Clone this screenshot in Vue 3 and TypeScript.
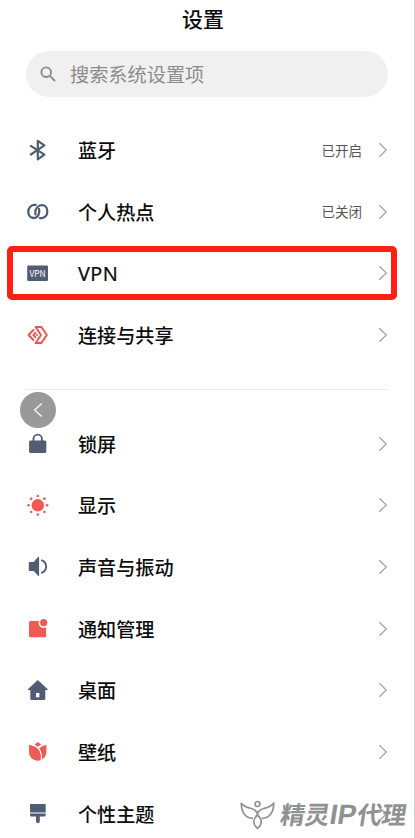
<script setup lang="ts">
interface Item {
  icon: string
  label: string
  status?: string
  highlighted?: boolean
}

const groups: Item[][] = [
  [
    { icon: 'bluetooth', label: '蓝牙', status: '已开启' },
    { icon: 'hotspot', label: '个人热点', status: '已关闭' },
    { icon: 'vpn', label: 'VPN', highlighted: true },
    { icon: 'share', label: '连接与共享' },
  ],
  [
    { icon: 'lock', label: '锁屏' },
    { icon: 'display', label: '显示' },
    { icon: 'sound', label: '声音与振动' },
    { icon: 'notice', label: '通知管理' },
    { icon: 'home', label: '桌面' },
    { icon: 'wallpaper', label: '壁纸' },
    { icon: 'theme', label: '个性主题' },
  ],
]

const rays = [0, 45, 90, 135, 180, 225, 270, 315]
</script>

<template>
  <main class="screen">
    <h1 class="title">设置</h1>
    <div class="search">
      <svg class="search-icon" viewBox="0 0 16 16">
        <circle cx="6.2" cy="6.2" r="4.8" />
        <path d="M9.8 9.8L15 15" />
      </svg>
      <span>搜索系统设置项</span>
    </div>

    <section v-for="(group, g) in groups" :key="g" class="group">
      <div v-for="item in group" :key="item.label" class="row">
        <svg class="icon" viewBox="0 0 24 24">
          <g v-if="item.icon === 'bluetooth'" class="line navy">
            <path d="M4.8 6.8L18.4 15.7L11.8 20.3V1.8L18.4 6.4L4.8 15.5" stroke-width="2.2" />
          </g>
          <g v-else-if="item.icon === 'hotspot'" class="line navy">
            <path d="M9.6 5C5.2 4.6 2.3 7.8 2.3 11.8C2.3 15.6 4.6 18 7.6 18C10.6 18 12.6 15.6 13.1 12.6C13.3 11.2 13.3 10 13 8.8" stroke-width="2.3" />
            <path d="M14 18.2C18.4 18.6 21.3 15.4 21.3 11.4C21.3 7.6 19 5.2 16 5.2C13 5.2 10.2 7.6 9.5 10.6C9.2 12 9.2 13.2 9.5 14.4" stroke-width="2.3" />
          </g>
          <g v-else-if="item.icon === 'vpn'">
            <rect class="fill-navy" x="1.2" y="3.4" width="20.8" height="15.6" rx="1.2" />
            <text class="vpn-text" x="11.6" y="14.6">VPN</text>
          </g>
          <g v-else-if="item.icon === 'share'" class="line red">
            <path d="M9.6 4H15.4L20.8 12L15.4 20H9.6L15 12Z" stroke-width="2" />
            <path d="M7.4 7L2.6 12L7.4 17M9.4 9.8L7.4 12L9.4 14.2" stroke-width="2" />
            <path d="M10.8 12H10.9" stroke-width="2" />
          </g>
          <g v-else-if="item.icon === 'lock'">
            <path class="line navy" d="M7.5 10V6.8a4.2 4.2 0 0 1 8.4 0v3.2" stroke-width="1.9" />
            <rect class="fill-navy" x="3.1" y="8.6" width="17.2" height="12.4" rx="1.4" />
          </g>
          <g v-else-if="item.icon === 'display'" class="fill-red">
            <circle cx="11.8" cy="11.3" r="6.2" />
            <circle v-for="a in rays" :key="a" cx="21.1" cy="11.3" r="1.3" :transform="`rotate(${a} 11.8 11.3)`" />
          </g>
          <g v-else-if="item.icon === 'sound'">
            <path class="fill-navy" d="M3.4 7.1H7.7L12 2.1Q13.1 1 13.1 2.5V20.3Q13.1 21.8 12 20.7L7.7 15.9H3.4Q2.8 15.9 2.8 15.3V7.7Q2.8 7.1 3.4 7.1Z" />
            <path class="line navy" d="M15.9 5.4C21.4 7.3 21.4 15.9 15.9 17.7" stroke-width="1.9" />
          </g>
          <g v-else-if="item.icon === 'notice'">
            <rect class="fill-red" x="3" y="4" width="17.1" height="16.2" rx="1.5" />
            <circle cx="17.7" cy="5.9" r="5.1" fill="#fff" />
            <circle class="fill-red" cx="17.7" cy="5.7" r="3.6" />
          </g>
          <path v-else-if="item.icon === 'home'" class="fill-navy" fill-rule="evenodd" d="M11.2 1.6Q11.8 1.1 12.4 1.6L21.7 10.2Q22.2 11.1 21.1 11.1H19.3V19.7Q19.3 21 18 21H5.6Q4.3 21 4.3 19.7V11.1H2.5Q1.4 11.1 1.9 10.2ZM10 14V18.2H13.4V14Z" />
          <g v-else-if="item.icon === 'wallpaper'" class="fill-red">
            <path d="M3 4.7Q11 5.9 13.8 11.6Q15.4 15.4 14.7 20.3C7.6 22 2.8 17.6 3 11.6Z" />
            <path d="M20.4 4.7V12.1Q20 17.3 16 19.8Q16.5 12.9 13.2 8.2Q16.2 5.6 20.4 4.7Z" />
            <path d="M11.8 2.1L15.2 4.6L11.8 6.7L8.6 4.6Z" />
          </g>
          <g v-else class="fill-navy">
            <rect x="4" y="2" width="15.7" height="8.6" rx=".7" />
            <path d="M4 11.5H19.7V13Q19.7 14.5 18.3 14.5H13.8V19.2Q13.8 21.1 11.9 21.1Q10 21.1 10 19.2V14.5H5.4Q4 14.5 4 13Z" />
          </g>
        </svg>
        <span class="label" :class="{ latin: item.highlighted }">{{ item.label }}</span>
        <span v-if="item.status" class="status">{{ item.status }}</span>
        <svg class="chevron" viewBox="0 0 10 16"><path d="M1.3 1.2L8.3 8L1.3 14.8" /></svg>
        <div v-if="item.highlighted" class="highlight"></div>
      </div>
    </section>

    <div class="back">
      <svg viewBox="0 0 10 16"><path d="M8.8 1.5L1.6 8L8.8 14.5" /></svg>
    </div>

    <div class="watermark">
      <svg viewBox="0 0 36 30">
        <circle cx="17.5" cy="4" r="2.5" />
        <path d="M1.2 3C3.8 7 7.4 7.5 11.2 8.5C15 9.5 17.5 12 17.5 15C17.5 12 20 9.5 23.8 8.5C27.6 7.5 31.2 7 33.8 3C33.6 11 30.8 17.8 22 18.4M1.2 3C1.4 11 4.2 17.8 13 18.4" />
        <path d="M17.5 15C12.5 19 12.5 24.5 17.5 28.4C22.5 24.5 22.5 19 17.5 15Z" />
      </svg>
      <span class="brand">精灵<span class="brand-latin">IP</span>代理</span>
    </div>
  </main>
</template>

<style>
body {
  margin: 0;
  overflow: hidden;
}
</style>

<style scoped>
.screen {
  position: relative;
  box-sizing: border-box;
  width: 415px;
  height: 838px;
  overflow: hidden;
  padding: 0 26px;
  border-right: 1px solid #d2d2d2;
  background: #fff;
  color: #0c0c0c;
  font-family: "Noto Sans CJK SC", sans-serif;
}
.title {
  height: 37px;
  margin: 0 0 14px;
  padding-left: 28px;
  padding-right: 36px;
  font-size: 21px;
  line-height: 36px;
  font-weight: 500;
  text-align: center;
}
.search {
  display: flex;
  align-items: center;
  width: 362px;
  height: 46px;
  margin-bottom: 22.7px;
  padding-left: 14px;
  box-sizing: border-box;
  border-radius: 23px;
  background: #f0f0f0;
  color: #8c8c8c;
  font-size: 19.2px;
}
.search-icon {
  width: 16px;
  height: 16px;
  margin-right: 14px;
  fill: none;
  stroke: #8a8a8a;
  stroke-width: 1.9;
}
.group + .group {
  margin-top: 22.5px;
  padding-top: 23.5px;
  border-top: 1px solid #ebebeb;
  width: 362px;
}
.row {
  position: relative;
  display: flex;
  align-items: center;
  width: 362px;
  height: 61.67px;
}
.icon {
  flex: none;
  width: 24px;
  height: 24px;
  margin-right: 28px;
}
.line {
  fill: none;
  stroke-linejoin: round;
  stroke-linecap: round;
}
.navy {
  stroke: #515d72;
}
.red {
  stroke: #ed554f;
}
.fill-navy {
  fill: #515d72;
}
.fill-red {
  fill: #f05a54;
}
.vpn-text {
  fill: #fff;
  font: 8.4px "Noto Sans CJK SC", sans-serif;
  text-anchor: middle;
}
.label {
  flex: 1;
  padding-bottom: 1px;
  font-size: 19.1px;
  font-weight: 500;
  white-space: nowrap;
}
.latin {
  font-family: "Noto Sans", sans-serif;
  font-size: 19.8px;
  letter-spacing: 0.5px;
  font-weight: 400;
  -webkit-text-stroke: 0.2px #0c0c0c;
}
.status {
  margin-right: 16px;
  padding-bottom: 1.5px;
  color: #555;
  font-size: 13.5px;
}
.chevron {
  width: 10px;
  height: 16px;
  padding-bottom: 1px;
  fill: none;
  stroke: #a2a2a2;
  stroke-width: 1.2;
}
.highlight {
  position: absolute;
  left: -18.6px;
  top: 3px;
  box-sizing: border-box;
  width: 389.3px;
  height: 54px;
  border: 6px solid #ff2013;
  border-radius: 5px;
}
.back {
  position: absolute;
  left: 20px;
  top: 392px;
  display: grid;
  place-items: center;
  width: 36px;
  height: 36px;
  border-radius: 50%;
  background: #999;
}
.back svg {
  width: 10px;
  height: 16px;
  fill: none;
  stroke: #fff;
  stroke-width: 1.2;
}
.watermark {
  position: absolute;
  left: 240px;
  top: 799px;
  display: flex;
  align-items: center;
  gap: 5px;
  color: #8f9193;
  white-space: nowrap;
}
.watermark svg {
  width: 36px;
  height: 30px;
  margin-top: 1px;
  fill: none;
  stroke: #8f9193;
  stroke-width: 1.7;
  stroke-linejoin: round;
}
.brand {
  margin-top: -3px;
  font-size: 24.6px;
  line-height: 32px;
  font-weight: 700;
  transform: skewX(-9deg);
}
.brand-latin {
  margin: 0 1px 0 0;
  font-family: "Liberation Sans", sans-serif;
  font-size: 28px;
  line-height: 1;
}
</style>
